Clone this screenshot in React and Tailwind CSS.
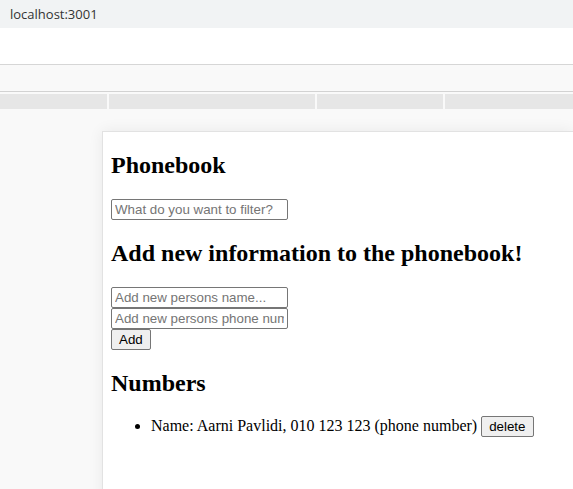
export default function App() {
  const serif = { fontFamily: '"Liberation Serif", "Times New Roman", serif' };
  const inputCls =
    "block w-[177px] h-[21px] border border-[#767676] rounded-[2px] px-[3px] text-[13.33px] leading-[15px] text-black placeholder:text-[#757575] bg-white outline-none";
  const btnCls =
    "h-[21px] border border-[#767676] rounded-[2px] bg-[#efefef] px-[7px] text-[13.33px] leading-[15px] text-black";

  return (
    <div className="h-[489px] w-[573px] overflow-hidden bg-[#f9f9f9] leading-[normal]">
      {/* address bar */}
      <div
        className="h-[28px] bg-[#f1f3f4] pl-[10px] flex items-center text-[13px] text-[#333]"
        style={{ fontFamily: '"Open Sans", "Noto Sans", sans-serif' }}
      >
        localhost:3001
      </div>
      <div className="h-[37px] bg-white border-b border-[#d6d6d6]" />
      <div className="h-[27px] bg-[#f9f9f9] border-b border-[#d2d2d2]" />
      <div className="flex gap-[2px] pt-[2px] h-[17px]">
        <div className="w-[107px] bg-[#e6e6e6]" />
        <div className="w-[206px] bg-[#e6e6e6]" />
        <div className="w-[126px] bg-[#e6e6e6]" />
        <div className="flex-1 bg-[#e6e6e6]" />
      </div>

      {/* page card */}
      <div
        className="ml-[102px] mt-[22px] h-[400px] bg-white border-l border-t border-[#e2e2e2] shadow-[0_0_14px_rgba(0,0,0,0.07)] pl-[8px] text-black text-[16px]"
        style={serif}
      >
        <h2 className="text-[24px] font-bold my-[19.92px]">Phonebook</h2>
        <div style={{ fontFamily: '"Liberation Sans", Arial, sans-serif' }}>
          <input className={inputCls} placeholder="What do you want to filter?" />
        </div>
        <h2 className="text-[24px] font-bold my-[19.92px]">
          Add new information to the phonebook!
        </h2>
        <form
          className="flex flex-col items-start"
          style={{ fontFamily: '"Liberation Sans", Arial, sans-serif' }}
          onSubmit={(e) => e.preventDefault()}
        >
          <input className={inputCls} placeholder="Add new persons name..." />
          <input className={inputCls} placeholder="Add new persons phone number..." />
          <button type="submit" className={btnCls}>
            Add
          </button>
        </form>
        <h2 className="text-[24px] font-bold my-[19.92px]">Numbers</h2>
        <ul className="list-disc pl-[40px] my-[16px]">
          <li>
            Name: Aarni Pavlidi, 010 123 123 (phone number){" "}
            <button
              className={btnCls + " inline-block align-baseline"}
              style={{ fontFamily: '"Liberation Sans", Arial, sans-serif' }}
            >
              delete
            </button>
          </li>
        </ul>
      </div>
    </div>
  );
}
